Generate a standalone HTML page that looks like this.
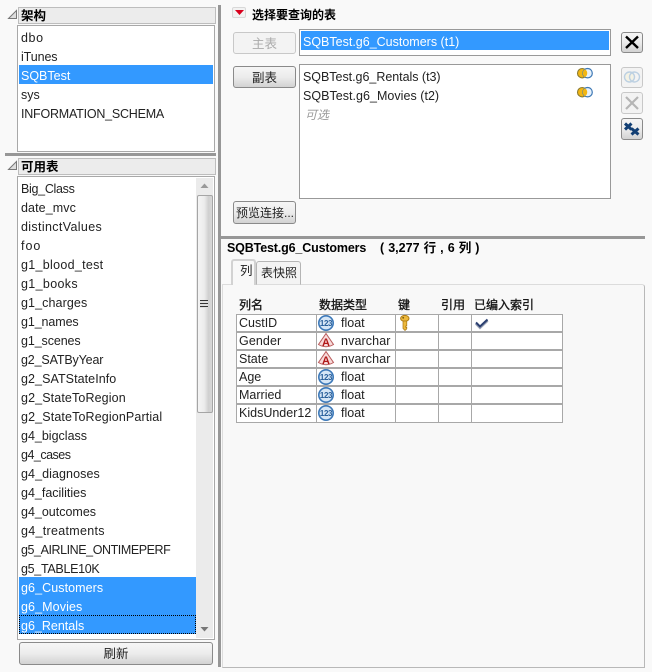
<!DOCTYPE html>
<html><head><meta charset="utf-8">
<style>
html,body{margin:0;padding:0}
body{width:652px;height:672px;overflow:hidden;background:#f9f9f9;position:relative;font-family:"Liberation Sans","Noto Sans CJK SC",sans-serif;font-size:12.5px;color:#222}
.a{position:absolute;box-sizing:border-box}
.t{position:absolute;white-space:nowrap;line-height:16px;height:16px}
.b{font-weight:bold;color:#000}
.hd{position:absolute;box-sizing:border-box;left:18px;width:198px;background:#ececec;border:1px solid #bdbdbd}
.box{position:absolute;box-sizing:border-box;background:#fff;border:1px solid #a8a8a8}
.sel{position:absolute;background:#3399ff}
.w{color:#fff}
.btn{position:absolute;box-sizing:border-box;border:1px solid #8a8a8a;border-radius:3px;background:linear-gradient(#f6f6f6 0%,#ececec 50%,#d2d2d2 100%);text-align:center;line-height:22px;color:#222}
.dis{border-color:#c8c8c8;background:#f3f3f3;color:#aaa}
.sp{position:absolute;background:#979797}
.tc{position:absolute;background:#a8a8a8}
svg{position:absolute;overflow:visible}
</style></head><body>

<!-- vertical splitter -->
<div class="sp" style="left:218px;top:5px;width:3px;height:662px"></div>
<div class="sp" style="left:5px;top:153px;width:211px;height:3px"></div>
<div class="sp" style="left:221px;top:236px;width:424px;height:3px"></div>

<!-- schema section -->
<svg style="left:8px;top:10px" width="9" height="9"><path d="M0.5 8.5H8.5V0.5Z" fill="#ddd" stroke="#777"/></svg>
<div class="hd" style="top:7px;height:17px"></div>
<div class="t b" style="left:21px;top:8px">架构</div>
<div class="box" style="left:17px;top:25px;width:198px;height:127px"></div>
<div class="sel" style="left:19px;top:65px;width:194px;height:19px"></div>
<div class="t" style="left:21px;top:30px;letter-spacing:.6px">dbo</div>
<div class="t" style="left:21px;top:49px;letter-spacing:-.1px">iTunes</div>
<div class="t w" style="left:21px;top:68px">SQBTest</div>
<div class="t" style="left:21px;top:87px">sys</div>
<div class="t" style="left:21px;top:106px;letter-spacing:-.22px">INFORMATION_SCHEMA</div>

<!-- tables section -->
<svg style="left:8px;top:161px" width="9" height="9"><path d="M0.5 8.5H8.5V0.5Z" fill="#ddd" stroke="#777"/></svg>
<div class="hd" style="top:158px;height:17px"></div>
<div class="t b" style="left:21px;top:159px">可用表</div>
<div class="box" style="left:17px;top:176px;width:198px;height:464px"></div>

<div class="t" style="left:21px;top:181px;letter-spacing:-.3px">Big_Class</div>
<div class="t" style="left:21px;top:200px;letter-spacing:.1px">date_mvc</div>
<div class="t" style="left:21px;top:219px;letter-spacing:.35px">distinctValues</div>
<div class="t" style="left:21px;top:238px;letter-spacing:1px">foo</div>
<div class="t" style="left:21px;top:257px;letter-spacing:.3px">g1_blood_test</div>
<div class="t" style="left:21px;top:276px;letter-spacing:.35px">g1_books</div>
<div class="t" style="left:21px;top:295px;letter-spacing:.1px">g1_charges</div>
<div class="t" style="left:21px;top:314px;letter-spacing:-.1px">g1_names</div>
<div class="t" style="left:21px;top:333px;letter-spacing:-.1px">g1_scenes</div>
<div class="t" style="left:21px;top:352px;letter-spacing:-.15px">g2_SATByYear</div>
<div class="t" style="left:21px;top:371px;letter-spacing:.07px">g2_SATStateInfo</div>
<div class="t" style="left:21px;top:390px;letter-spacing:.12px">g2_StateToRegion</div>
<div class="t" style="left:21px;top:409px;letter-spacing:.13px">g2_StateToRegionPartial</div>
<div class="t" style="left:21px;top:428px">g4_bigclass</div>
<div class="t" style="left:21px;top:447px;letter-spacing:-.5px">g4_cases</div>
<div class="t" style="left:21px;top:466px;letter-spacing:.08px">g4_diagnoses</div>
<div class="t" style="left:21px;top:485px">g4_facilities</div>
<div class="t" style="left:21px;top:504px">g4_outcomes</div>
<div class="t" style="left:21px;top:523px;letter-spacing:.3px">g4_treatments</div>
<div class="t" style="left:21px;top:542px;letter-spacing:-.43px">g5_AIRLINE_ONTIMEPERF</div>
<div class="t" style="left:21px;top:561px;letter-spacing:-.3px">g5_TABLE10K</div>
<div class="sel" style="left:19px;top:577px;width:177px;height:57px"></div>
<div class="a" style="left:19px;top:615px;width:177px;height:19px;border:1px dotted #000"></div>
<div class="t w" style="left:21px;top:580px;letter-spacing:.08px">g6_Customers</div>
<div class="t w" style="left:21px;top:599px;letter-spacing:.1px">g6_Movies</div>
<div class="t w" style="left:21px;top:618px">g6_Rentals</div>

<!-- scrollbar -->
<div class="a" style="left:196px;top:178px;width:17px;height:460px;background:#ebebeb"></div>
<svg style="left:200px;top:183px" width="9" height="6"><path d="M4.5 0.5L8.5 5H0.5Z" fill="#999"/></svg>
<svg style="left:200px;top:626px" width="9" height="6"><path d="M4.5 5.5L8.5 1H0.5Z" fill="#777"/></svg>
<div class="a" style="left:197px;top:195px;width:16px;height:218px;border:1px solid #a5a5a5;border-radius:2px;background:linear-gradient(90deg,#f4f4f4,#ececec 45%,#cfcfcf 75%,#d8d8d8)"></div>
<div class="a" style="left:200px;top:300px;width:8px;height:8px;background:repeating-linear-gradient(#333 0 1px,#ddd 1px 3px)"></div>

<div class="btn" style="left:19px;top:642px;width:194px;height:23px">刷新</div>

<!-- query table header -->
<div class="a" style="left:232px;top:7px;width:14px;height:11px;background:#f2f2f2;border:1px solid #d8d8d8;border-radius:2px"></div>
<svg style="left:235px;top:10px" width="9" height="5"><path d="M0 0H9L4.5 5Z" fill="#d8001c"/></svg>
<div class="t b" style="left:252px;top:7px;font-size:12px">选择要查询的表</div>

<div class="btn dis" style="left:233px;top:32px;width:63px;height:22px">主表</div>
<div class="box" style="left:299px;top:29px;width:312px;height:27px;border-color:#999"></div>
<div class="sel" style="left:301px;top:31px;width:308px;height:19px"></div>
<div class="t w" style="left:303px;top:34px">SQBTest.g6_Customers (t1)</div>

<div class="btn" style="left:621px;top:32px;width:22px;height:21px"></div>
<svg style="left:621px;top:31px" width="22" height="22"><path d="M5 5.5L17 17M17 5.5L5 17" stroke="#000" stroke-width="2.4"/></svg>

<div class="btn" style="left:233px;top:66px;width:63px;height:22px">副表</div>
<div class="box" style="left:299px;top:64px;width:312px;height:135px;border-color:#999"></div>
<div class="t" style="left:303px;top:69px;letter-spacing:-.03px">SQBTest.g6_Rentals (t3)</div>
<div class="t" style="left:303px;top:88px;letter-spacing:.03px">SQBTest.g6_Movies (t2)</div>
<div class="t" style="left:305px;top:107px;color:#999;font-style:italic;font-size:12px">可选</div>

<svg style="left:577px;top:68px" width="16" height="11"><circle cx="5.2" cy="5.2" r="4.7" fill="#f2b612" stroke="#8a7a30" stroke-width="1.1"/><circle cx="10.6" cy="5.2" r="4.7" fill="#e8f2fb" stroke="#3d78b5" stroke-width="1.2"/><path d="M8 1.2A4.7 4.7 0 0 1 8 9.2A4.7 4.7 0 0 1 8 1.2Z" fill="#f2b612"/></svg>
<svg style="left:577px;top:87px" width="16" height="11"><circle cx="5.2" cy="5.2" r="4.7" fill="#f2b612" stroke="#8a7a30" stroke-width="1.1"/><circle cx="10.6" cy="5.2" r="4.7" fill="#e8f2fb" stroke="#3d78b5" stroke-width="1.2"/><path d="M8 1.2A4.7 4.7 0 0 1 8 9.2A4.7 4.7 0 0 1 8 1.2Z" fill="#f2b612"/></svg>

<div class="btn dis" style="left:621px;top:67px;width:22px;height:21px"></div>
<svg style="left:621px;top:66px" width="22" height="22"><circle cx="8.5" cy="11" r="5" fill="#f4f2e4" stroke="#bcd0e2" stroke-width="1.4"/><circle cx="13.5" cy="11" r="5" fill="none" stroke="#bcd0e2" stroke-width="1.4"/></svg>
<div class="btn dis" style="left:621px;top:92px;width:22px;height:22px"></div>
<svg style="left:621px;top:92px" width="22" height="22"><path d="M5 5L17 17M17 5L5 17" stroke="#b5b5b5" stroke-width="2.2"/></svg>
<div class="btn" style="left:621px;top:118px;width:22px;height:22px"></div>
<svg style="left:621px;top:118px" width="22" height="22"><path d="M4 5.5L10.5 11.5M10.5 5.5L4 11.5M10.5 10.5L17.5 16.5M17.5 10.5L10.5 16.5" stroke="#123f74" stroke-width="3"/></svg>

<div class="btn" style="left:233px;top:201px;width:63px;height:23px;white-space:nowrap;padding:0 2px;overflow:hidden;font-size:12px">预览连接...</div>

<!-- details -->
<div class="t b" style="left:227px;top:240px;letter-spacing:-.15px">SQBTest.g6_Customers</div>
<div class="t b" style="left:380px;top:240px;word-spacing:.6px">( 3,277 行 , 6 列 )</div>

<div class="a" style="left:222px;top:284px;width:423px;height:384px;background:#f8f8f8;border-top:1px solid #dcdcdc;border-right:1px solid #b8b8b8;border-bottom:1px solid #b8b8b8;border-left:1px solid #dcdcdc;border-top-right-radius:3px"></div>
<div class="a" style="left:231px;top:259px;width:25px;height:26px;background:#f8f8f8;border:2px solid #d2d2d2;border-bottom:none;border-radius:3px 3px 0 0"></div>
<div class="a" style="left:256px;top:261px;width:45px;height:24px;background:#f3f3f3;border:1px solid #b5b5b5;border-bottom:1px solid #dcdcdc;border-radius:3px 3px 0 0"></div>
<div class="t" style="left:240px;top:263px">列</div>
<div class="t" style="left:261px;top:265px;font-size:12px">表快照</div>

<!-- table -->
<div class="t" style="left:239px;top:297px;-webkit-text-stroke:.3px #000;font-size:12px">列名</div>
<div class="t" style="left:319px;top:297px;-webkit-text-stroke:.3px #000;font-size:12px">数据类型</div>
<div class="t" style="left:398px;top:297px;-webkit-text-stroke:.3px #000;font-size:12px">键</div>
<div class="t" style="left:441px;top:297px;-webkit-text-stroke:.3px #000;font-size:12px">引用</div>
<div class="t" style="left:474px;top:297px;-webkit-text-stroke:.3px #000;font-size:12px">已编入索引</div>

<div class="a" style="left:236px;top:314px;width:327px;height:109px;background:#fff"></div>
<div class="tc" style="left:236px;top:314px;width:327px;height:1px"></div>
<div class="tc" style="left:236px;top:331px;width:327px;height:2px"></div>
<div class="tc" style="left:236px;top:349px;width:327px;height:2px"></div>
<div class="tc" style="left:236px;top:367px;width:327px;height:2px"></div>
<div class="tc" style="left:236px;top:385px;width:327px;height:2px"></div>
<div class="tc" style="left:236px;top:403px;width:327px;height:2px"></div>
<div class="tc" style="left:236px;top:422px;width:327px;height:1px"></div>
<div class="tc" style="left:236px;top:314px;width:1px;height:109px"></div>
<div class="tc" style="left:316px;top:314px;width:1px;height:109px"></div>
<div class="tc" style="left:395px;top:314px;width:1px;height:109px"></div>
<div class="tc" style="left:438px;top:314px;width:1px;height:109px"></div>
<div class="tc" style="left:471px;top:314px;width:1px;height:109px"></div>
<div class="tc" style="left:562px;top:314px;width:1px;height:109px"></div>

<div class="t" style="left:239px;top:315px">CustID</div>
<div class="t" style="left:239px;top:333px;letter-spacing:.1px">Gender</div>
<div class="t" style="left:239px;top:351px">State</div>
<div class="t" style="left:239px;top:369px">Age</div>
<div class="t" style="left:239px;top:387px">Married</div>
<div class="t" style="left:239px;top:405px">KidsUnder12</div>

<div class="t" style="left:341px;top:315px">float</div>
<div class="t" style="left:341px;top:333px;letter-spacing:.12px">nvarchar</div>
<div class="t" style="left:341px;top:351px;letter-spacing:.12px">nvarchar</div>
<div class="t" style="left:341px;top:369px">float</div>
<div class="t" style="left:341px;top:387px">float</div>
<div class="t" style="left:341px;top:405px">float</div>

<svg style="left:318px;top:315px" width="16" height="16"><circle cx="8" cy="8" r="7.2" fill="#d6e6f6" stroke="#3c78b8" stroke-width="1.6"/><text x="8" y="10.8" font-size="8" font-weight="bold" letter-spacing="-.4" text-anchor="middle" fill="#2a5f9a" font-family="Liberation Sans">123</text></svg>
<svg style="left:318px;top:333px" width="16" height="16"><path d="M8 .5L15.5 11.5Q8 16 .5 11.5Z" fill="#f8dada" stroke="#b95a5a"/><text x="8" y="13" font-size="11" font-weight="bold" text-anchor="middle" fill="#b01818" font-family="Liberation Sans">A</text></svg>
<svg style="left:318px;top:351px" width="16" height="16"><path d="M8 .5L15.5 11.5Q8 16 .5 11.5Z" fill="#f8dada" stroke="#b95a5a"/><text x="8" y="13" font-size="11" font-weight="bold" text-anchor="middle" fill="#b01818" font-family="Liberation Sans">A</text></svg>
<svg style="left:318px;top:369px" width="16" height="16"><circle cx="8" cy="8" r="7.2" fill="#d6e6f6" stroke="#3c78b8" stroke-width="1.6"/><text x="8" y="10.8" font-size="8" font-weight="bold" letter-spacing="-.4" text-anchor="middle" fill="#2a5f9a" font-family="Liberation Sans">123</text></svg>
<svg style="left:318px;top:387px" width="16" height="16"><circle cx="8" cy="8" r="7.2" fill="#d6e6f6" stroke="#3c78b8" stroke-width="1.6"/><text x="8" y="10.8" font-size="8" font-weight="bold" letter-spacing="-.4" text-anchor="middle" fill="#2a5f9a" font-family="Liberation Sans">123</text></svg>
<svg style="left:318px;top:405px" width="16" height="16"><circle cx="8" cy="8" r="7.2" fill="#d6e6f6" stroke="#3c78b8" stroke-width="1.6"/><text x="8" y="10.8" font-size="8" font-weight="bold" letter-spacing="-.4" text-anchor="middle" fill="#2a5f9a" font-family="Liberation Sans">123</text></svg>

<svg style="left:400px;top:315px" width="10" height="16"><ellipse cx="4.8" cy="3.4" rx="4.2" ry="3" fill="#edb93c" stroke="#b07d14"/><circle cx="3.2" cy="2.8" r=".9" fill="#7a5a10"/><path d="M3 6V13.5L5 15.5L6.8 13.8V12.4H5.8V11H6.8V6Z" fill="#edb93c" stroke="#a87512" stroke-width=".7"/></svg>
<svg style="left:475px;top:318px" width="14" height="11"><path d="M1 5.5L5 9.5L12.5 2.5" fill="none" stroke="#9aa2b5" stroke-width="2.8"/><path d="M1 4.5L5 8.5L12.5 1.5" fill="none" stroke="#2b3f70" stroke-width="2"/></svg>

</body></html>
